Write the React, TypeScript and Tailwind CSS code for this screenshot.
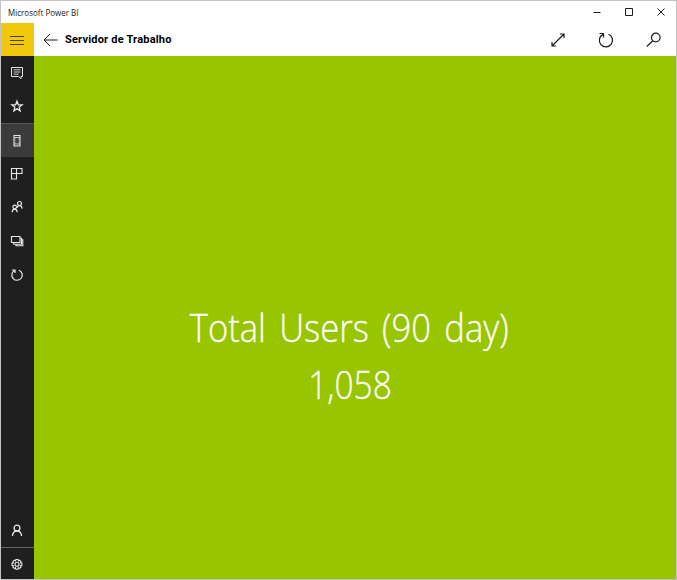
import type { ReactNode } from "react";

function Glyph({ size = 14, w = 1, children, className = "" }: { size?: number; w?: number; children: ReactNode; className?: string }) {
  return (
    <svg width={size} height={size} viewBox={`0 0 ${size} ${size}`} fill="none" stroke="currentColor" strokeWidth={w} className={`shrink-0 ${className}`}>
      {children}
    </svg>
  );
}

const icons: Record<string, ReactNode> = {
  feed: (
    <Glyph>
      <path d="M1.5 1.5h11v9H11v2.2l-2.4-2.2H1.5z" />
      <path d="M3.5 3.8h7M3.5 6h7M3.5 8.2h5" strokeWidth=".9" />
    </Glyph>
  ),
  star: (
    <Glyph w={1.3}>
      <path d="M7 2.2l1.35 3.6 3.7.1-2.9 2.3 1 3.7L7 9.8l-3.15 2.1 1-3.7-2.9-2.3 3.7-.1z" />
    </Glyph>
  ),
  device: (
    <Glyph w={1.1}>
      <path d="M4 1.5h6V12H4z" />
      <path d="M4 3.5h6M4 10h6" strokeWidth=".8" />
      <path d="M5 4h.8v6H5zM8.5 4h.8v6h-.8z" strokeWidth=".3" opacity=".6" />
    </Glyph>
  ),
  tiles: (
    <Glyph w={1.1}>
      <path d="M1.5 1.5H12v5H1.5zM1.5 6.5V12h5V1.5" />
    </Glyph>
  ),
  people: (
    <Glyph w={1.2}>
      <circle cx="9.5" cy="3.5" r="2" />
      <path d="M7 8c.3-1.500 1.200-2.300 2.500-2.300s2.400 1 2.600 2.900" />
      <circle cx="4.7" cy="7" r="1.8" />
      <path d="M2.200 12.200c.1-2 1.100-3.100 2.500-3.100s2.400 1.100 2.500 3.100" />
    </Glyph>
  ),
  stack: (
    <Glyph w={1.1}>
      <path d="M1.5 2.5H10v6H1.5z" />
      <path d="M10 4.200h1.500v6H3.800V8.800M12 5.800h.8v6H6v-1.500" />
    </Glyph>
  ),
  refresh: (
    <Glyph w={1.2}>
      <path d="M9 2.200A5.200 5.200 0 1 1 4.500 2.500M2 2h3v3" />
    </Glyph>
  ),
  user: (
    <Glyph w={1.3}>
      <circle cx="7" cy="5" r="2.9" />
      <path d="M2.400 13c.3-3 2.100-5 4.600-5s4.300 2 4.600 5" />
    </Glyph>
  ),
  gear: (
    <Glyph w={1.1}>
      <path d="M5.900 1.500h2.200l.3 1.400 1.200-.8 1.500 1.500-.7 1.200 1.500.3v2.200l-1.500.4.8 1.200-1.600 1.500-1.200-.7-.3 1.500H5.900l-.4-1.500-1.200.8-1.500-1.600.7-1.200-1.500-.3V5.100l1.500-.3-.7-1.200 1.500-1.500 1.200.8z" />
      <circle cx="7" cy="6.2" r="2" />
    </Glyph>
  ),
};

function NavItem({ name, active }: { name: string; active?: boolean }) {
  return (
    <button
      className={
        active
          ? "flex h-[33.67px] w-full items-center justify-center border-t border-[#555] bg-[#3b3b3b] pr-[2px]"
          : "flex h-[33.67px] w-full items-center justify-center pr-[2px]"
      }
    >
      {icons[name]}
    </button>
  );
}

export default function App() {
  return (
    <div className="flex h-[580px] w-[677px] flex-col overflow-hidden border border-[#c3c3c3] bg-white font-['Open_Sans',sans-serif] text-[#1a1a1a]">
      <div className="flex h-[22px] shrink-0 items-center justify-between pl-[7px]">
        <span className="origin-left scale-x-[0.89] text-[9px] leading-none whitespace-nowrap">Microsoft Power BI</span>
        <div className="flex gap-[22px] pr-[10px]">
          <Glyph size={10}><path d="M1.5 5.5h7" /></Glyph>
          <Glyph size={10}><path d="M1.5 1.5h7v7h-7z" /></Glyph>
          <Glyph size={10}><path d="M1.5 1.5l7 7M8.5 1.5l-7 7" /></Glyph>
        </div>
      </div>
      <div className="flex h-[33px] shrink-0 items-center">
        <button className="flex h-full w-[33px] items-center justify-center bg-[#f2c80f] pr-px text-[#4a4010]">
          <Glyph size={16}><path d="M1 4.5h14M1 8.5h14M1 12.5h14" /></Glyph>
        </button>
        <Glyph size={16} className="ml-2"><path d="M15.5 8H2M8 2L2 8l6 6" /></Glyph>
        <span className="ml-[7px] font-['Roboto',sans-serif] text-[11px] leading-none font-bold tracking-[0.2px] whitespace-nowrap text-black">Servidor de Trabalho</span>
        <div className="ml-auto flex items-center gap-8 pr-[14px]">
          <Glyph size={16} w={1.2}><path d="M2 14L14 2M10 2h4v4M2 10v4h4" /></Glyph>
          <Glyph size={16} w={1.2}><path d="M10.500 2.200A6.600 6.600 0 1 1 5 2.400M1.500 1.500h4V5.500" /></Glyph>
          <Glyph size={16} w={1.2}><circle cx="9.8" cy="5.5" r="4.3" /><path d="M6.800 8.700L.8 14.500" /></Glyph>
        </div>
      </div>
      <div className="flex min-h-0 flex-1">
        <nav className="flex w-[33px] shrink-0 flex-col bg-[#1f1f1f] text-[#e6e6e6]">
          <NavItem name="feed" />
          <NavItem name="star" />
          <NavItem name="device" active />
          <NavItem name="tiles" />
          <NavItem name="people" />
          <NavItem name="stack" />
          <NavItem name="refresh" />
          <div className="mt-auto">
            <NavItem name="user" />
            <div className="flex h-[32px] items-center justify-center border-t border-[#666] pt-[3px] pr-[2px]">{icons.gear}</div>
          </div>
        </nav>
        <main className="flex flex-1 flex-col items-center bg-[#97c500] pt-[243px] pr-[12px] text-[38px] leading-[57px] font-light whitespace-nowrap text-white [-webkit-text-stroke:0.3px_white]">
          <div className="scale-x-[0.91] [word-spacing:4.8px]">Total Users (90 day)</div>
          <div className="translate-x-[0.5px] scale-x-[0.88]">1,058</div>
        </main>
      </div>
    </div>
  );
}
